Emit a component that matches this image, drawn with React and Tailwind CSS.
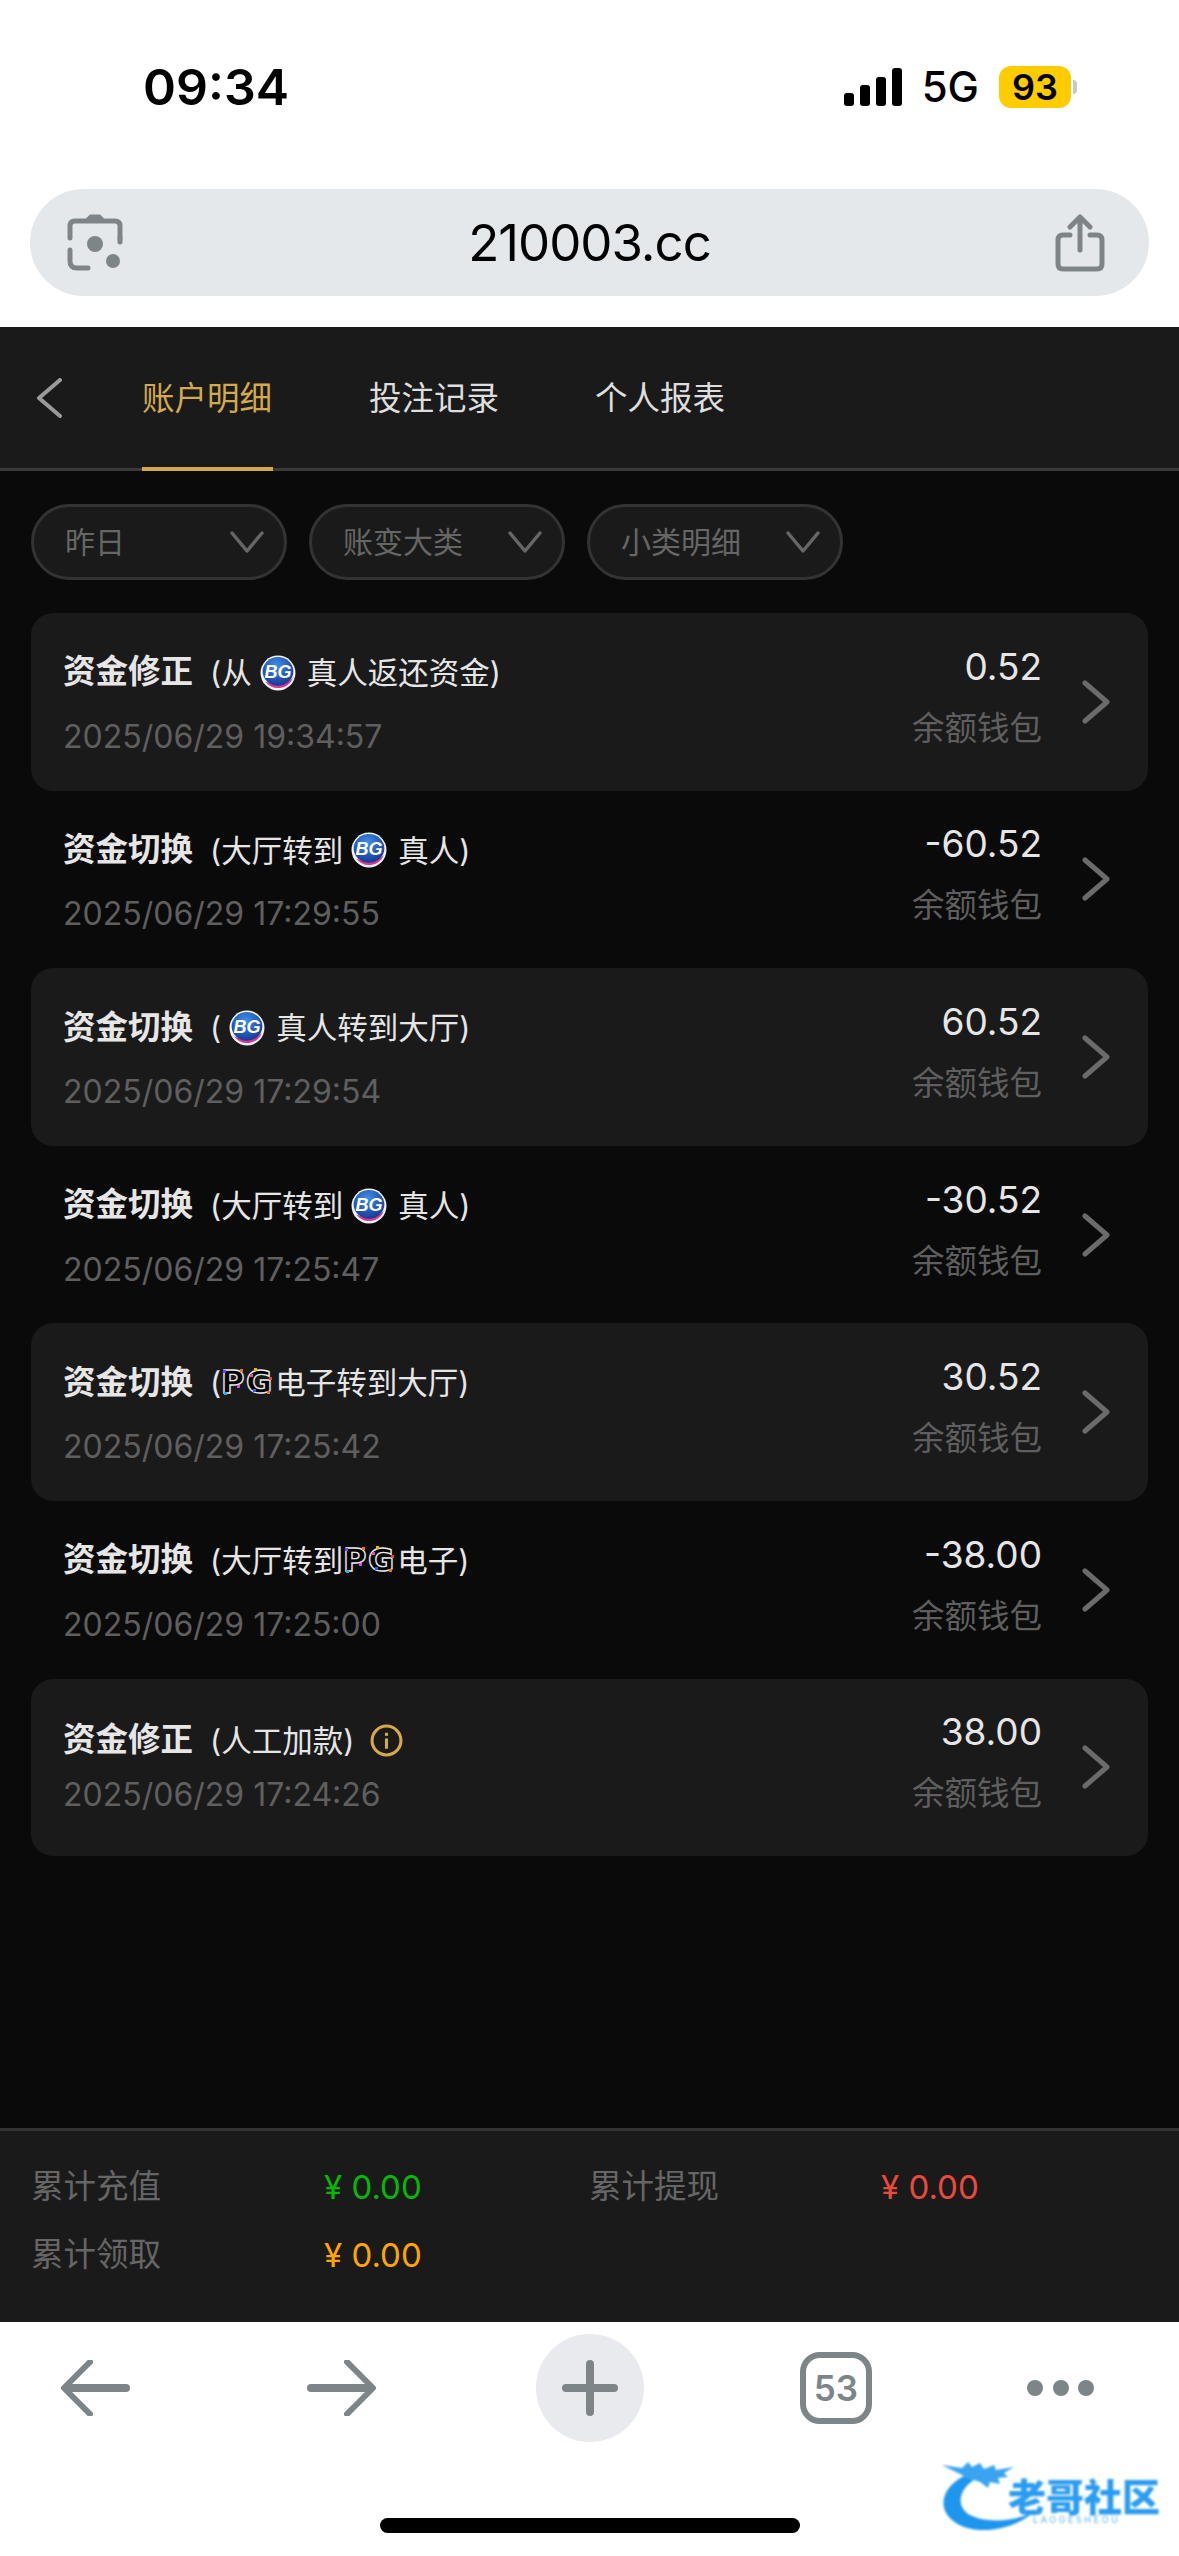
import React from "react";

const cjk = "font-['Inter','Noto_Sans_CJK_SC',sans-serif]";

// BG vendor badge
const BgLogo = () => (
  <svg width="36" height="36" viewBox="0 0 34 34" className="ml-[8px] mr-[11px] flex-none">
    <defs>
      <radialGradient id="bgBlue" cx="45%" cy="30%" r="75%">
        <stop offset="0%" stopColor="#3f8fe8" />
        <stop offset="100%" stopColor="#12358f" />
      </radialGradient>
    </defs>
    <circle cx="17" cy="17" r="16.5" fill="#f4f4f8" />
    <path d="M5 25 A15 15 0 0 0 31 22 Q20 31 5 25 Z" fill="#e0358f" />
    <ellipse cx="17" cy="15.5" rx="14.5" ry="13.5" fill="url(#bgBlue)" />
    <text x="17" y="22" textAnchor="middle" fontFamily="Liberation Sans" fontWeight="700" fontStyle="italic" fontSize="17" fill="#fff">BG</text>
  </svg>
);

// PG vendor badge: outlined letters with coloured corner dots
const PgLogo = () => (
  <svg width="54" height="32" viewBox="0 0 54 32" className="flex-none overflow-visible">
    <text x="0" y="26" fontFamily="DejaVu Sans" fontWeight="700" fontSize="32" fill="#000" stroke="#e8e8e8" strokeWidth="1.4">P</text>
    <text x="25" y="26" fontFamily="DejaVu Sans" fontWeight="700" fontSize="32" fill="#000" stroke="#e8e8e8" strokeWidth="1.4">G</text>
    <rect x="2" y="3" width="3" height="3" fill="#7c3aed" />
    <rect x="19" y="2" width="3" height="3" fill="#f97316" />
    <rect x="3" y="25" width="3" height="3" fill="#22b8e8" />
    <rect x="16" y="18" width="3" height="3" fill="#d946ef" />
    <rect x="29" y="7" width="3" height="3" fill="#ec4899" />
    <rect x="33" y="1" width="3" height="3" fill="#f5b50a" />
    <rect x="48" y="10" width="3" height="3" fill="#ef4444" />
    <rect x="32" y="22" width="3" height="3" fill="#2563eb" />
    <rect x="46" y="24" width="3" height="3" fill="#f97316" />
  </svg>
);

const rows = [
  { title: "资金修正", note: ["(从", "bg", "真人返还资金)"], time: "2025/06/29 19:34:57", amount: "0.52", card: true },
  { title: "资金切换", note: ["(大厅转到", "bg", "真人)"], time: "2025/06/29 17:29:55", amount: "-60.52" },
  { title: "资金切换", note: ["(", "bg", "真人转到大厅)"], time: "2025/06/29 17:29:54", amount: "60.52", card: true },
  { title: "资金切换", note: ["(大厅转到", "bg", "真人)"], time: "2025/06/29 17:25:47", amount: "-30.52" },
  { title: "资金切换", note: ["(", "pg", "电子转到大厅)"], time: "2025/06/29 17:25:42", amount: "30.52", card: true },
  { title: "资金切换", note: ["(大厅转到", "pg", "电子)"], time: "2025/06/29 17:25:00", amount: "-38.00" },
  { title: "资金修正", note: ["(人工加款)"], time: "2025/06/29 17:24:26", amount: "38.00", card: true, info: true },
];

const Filter = ({ label }) => (
  <div className="flex h-[76px] w-[256px] flex-none items-center justify-between rounded-full border-[3px] border-[#333333] bg-[#1a1a1a] pl-[31px] pr-[20px] text-[30px] text-[#666666]">
    <span>{label}</span>
    <svg width="34" height="22" viewBox="0 0 34 22" fill="none" stroke="#666666" strokeWidth="3.5" strokeLinecap="round" strokeLinejoin="round">
      <path d="M2 2 L17 20 L32 2" />
    </svg>
  </div>
);

const Row = ({ row }) => (
  <div className={`flex h-[177.6px] items-center rounded-[22px] pl-[32px] pr-[38px] ${row.card ? "bg-[#1a1a1a]" : ""}`}>
    <div className={`flex-1 ${row.info ? "pt-[1px]" : "pt-[6px]"}`}>
      <div className="flex h-[40px] items-center text-[30.5px] text-[#e6e6e6]">
        <span className="mr-[17px] flex-none text-[32.5px] font-bold">{row.title}</span>
        {row.note.map((part, i) =>
          part === "bg" ? <BgLogo key={i} /> : part === "pg" ? <PgLogo key={i} /> : <span key={i}>{part}</span>
        )}
        {row.info && (
          <svg width="33" height="33" viewBox="0 0 32 32" className="ml-[16px] flex-none">
            <circle cx="16" cy="16" r="14" fill="none" stroke="#d4a94a" strokeWidth="3" />
            <rect x="14.5" y="14" width="3" height="10" fill="#d4a94a" />
            <rect x="14.5" y="8.5" width="3" height="3" fill="#d4a94a" />
          </svg>
        )}
      </div>
      <div className={`${row.info ? "mt-[14px]" : "mt-[24px]"} text-[32px] leading-[40px] text-[#5f5f5f]`}>{row.time}</div>
    </div>
    <div className="mb-[8px] flex flex-col items-end">
      <div className="text-[37px] leading-[44px] text-[#e6e6e6]">{row.amount}</div>
      <div className="mt-[18px] text-[32.5px] leading-[44px] text-[#5f5f5f]">余额钱包</div>
    </div>
    <svg width="28" height="44" viewBox="0 0 28 44" fill="none" stroke="#6b6b6b" strokeWidth="5" strokeLinecap="round" strokeLinejoin="round" className="ml-[40px] flex-none">
      <path d="M3 3 L25 22 L3 41" />
    </svg>
  </div>
);

const Stat = ({ label, value, color }) => (
  <>
    <div className="text-[32.5px] leading-[68px] text-[#666666]">{label}</div>
    <div className={`text-[33px] leading-[68px] ${color}`}>{value}</div>
  </>
);

export default function App() {
  return (
    <div className={`relative flex h-[2556px] w-[1179px] flex-col overflow-hidden bg-white ${cjk}`}>
      {/* status bar + address bar */}
      <div className="h-[327px] flex-none">
        <div className="flex h-[189px] items-start justify-between pl-[143px] pr-[102px] pt-[59px]">
          <span className="text-[50px] font-semibold leading-[56px] text-black">09:34</span>
          <div className="flex items-center pt-[7px]">
            <svg width="58" height="38" viewBox="0 0 58 38" className="mr-[20px]">
              <rect x="0" y="25" width="10" height="13" rx="3" />
              <rect x="16" y="17" width="10" height="21" rx="3" />
              <rect x="32" y="9" width="10" height="29" rx="3" />
              <rect x="48" y="0" width="10" height="38" rx="3" />
            </svg>
            <span className="mr-[20px] text-[42px] font-medium leading-[42px] text-black">5G</span>
            <span className="flex h-[42px] w-[72px] items-center justify-center rounded-[12px] bg-[#ffcc00] text-[36px] font-semibold text-black">93</span>
            <span className="ml-[2px] h-[14px] w-[4px] rounded-r-full bg-[#c8c8c8]" />
          </div>
        </div>
        <div className="mx-[30px] flex h-[107px] items-center justify-between rounded-[54px] bg-[#e5e8eb] pl-[36px] pr-[44px]">
          <svg width="58" height="58" viewBox="0 0 58 58" fill="none" stroke="#7e8589" strokeWidth="5" strokeLinecap="round">
            <path d="M22 6 L25 3 H33 L36 6 Z" fill="#7e8589" />
            <path d="M4 24 V12 Q4 7 9 7 H49 Q54 7 54 12 V24" />
            <path d="M4 36 V47 Q4 54 11 54 H22" />
            <path d="M54 24 V28" />
            <circle cx="29" cy="30" r="8" fill="#7e8589" stroke="none" />
            <circle cx="47" cy="47" r="7" fill="#7e8589" stroke="none" />
          </svg>
          <span className="text-[51px] leading-[60px] tracking-[-1px] text-black">210003.cc</span>
          <svg width="50" height="58" viewBox="0 0 50 58" fill="none" stroke="#7e8589" strokeWidth="5" strokeLinecap="round" strokeLinejoin="round">
            <path d="M25 36 V4 M15 13 L25 3 L35 13" />
            <path d="M15 21 H8 Q3 21 3 26 V50 Q3 55 8 55 H42 Q47 55 47 50 V26 Q47 21 42 21 H35" />
          </svg>
        </div>
      </div>

      {/* tabs */}
      <div className="flex h-[144px] flex-none items-stretch border-b-[3px] border-[#3a3a3a] bg-[#1a1a1a] pl-[36px]">
        <div className="flex w-[106px] items-center">
          <svg width="26" height="40" viewBox="0 0 26 40" fill="none" stroke="#9a9a9a" strokeWidth="4" strokeLinecap="round" strokeLinejoin="round">
            <path d="M24 2 L3 20 L24 38" />
          </svg>
        </div>
        <div className="relative flex w-[131px] items-center pt-[3px] text-[32.5px] text-[#d4a94a]">
          账户明细
          <span className="absolute bottom-[-3px] left-0 h-[4px] w-full bg-[#d4a94a]" />
        </div>
        <div className="ml-[96px] flex items-center pt-[3px] text-[32.5px] text-[#dedede]">投注记录</div>
        <div className="ml-[96px] flex items-center pt-[3px] text-[32.5px] text-[#dedede]">个人报表</div>
      </div>

      {/* list */}
      <div className="flex-1 bg-[#0a0a0a] px-[31px] pt-[33px]">
        <div className="flex gap-[22px]">
          <Filter label="昨日" />
          <Filter label="账变大类" />
          <Filter label="小类明细" />
        </div>
        <div className="mt-[33px]">
          {rows.map((row) => (
            <Row key={row.time} row={row} />
          ))}
        </div>
      </div>

      {/* totals */}
      <div className="h-[194px] flex-none border-t-[3px] border-[#333333] bg-[#1a1a1a] pl-[31px] pt-[22px]">
        <div className="grid grid-cols-[293px_265px_292px_1fr]">
          <Stat label="累计充值" value="¥ 0.00" color="text-[#06b806]" />
          <Stat label="累计提现" value="¥ 0.00" color="text-[#ea4a3a]" />
          <Stat label="累计领取" value="¥ 0.00" color="text-[#ffa500]" />
        </div>
      </div>

      {/* browser toolbar */}
      <div className="h-[234px] flex-none bg-white pt-[12px]">
        <div className="flex h-[108px] items-center">
          <svg width="70" height="56" viewBox="0 0 70 56" fill="none" stroke="#7e8589" strokeLinecap="round" strokeLinejoin="round" className="ml-[60px] flex-none">
            <path d="M30 2 L4 28 L30 54" strokeWidth="6" />
            <path d="M8 28 H66" strokeWidth="8" />
          </svg>
          <svg width="70" height="56" viewBox="0 0 70 56" fill="none" stroke="#7e8589" strokeLinecap="round" strokeLinejoin="round" className="ml-[177px] flex-none">
            <path d="M40 2 L66 28 L40 54" strokeWidth="6" />
            <path d="M4 28 H62" strokeWidth="8" />
          </svg>
          <div className="ml-[159px] flex h-[108px] w-[108px] flex-none items-center justify-center rounded-full bg-[#e9eaee]">
            <svg width="56" height="56" viewBox="0 0 56 56" stroke="#7e8589" strokeWidth="8" strokeLinecap="round">
              <path d="M28 4 V52 M4 28 H52" />
            </svg>
          </div>
          <div className="ml-[156px] flex h-[72px] w-[72px] flex-none items-center justify-center rounded-[20px] border-[6px] border-[#7e8589] text-[35px] font-semibold text-[#7e8589]">
            53
          </div>
          <div className="ml-[155px] flex w-[67px] flex-none justify-between">
            <span className="h-[16px] w-[16px] rounded-full bg-[#7e8589]" />
            <span className="h-[16px] w-[16px] rounded-full bg-[#7e8589]" />
            <span className="h-[16px] w-[16px] rounded-full bg-[#7e8589]" />
          </div>
        </div>
        <div className="mx-auto mt-[76px] h-[15px] w-[420px] rounded-full bg-black" />
      </div>

      {/* site watermark */}
      <div className="absolute left-[938px] top-[2458px] h-[88px] w-[230px] blur-[1px]">
        <svg width="110" height="80" viewBox="0 0 110 80" className="absolute left-0 top-0">
          <path d="M26 18 C6 28 -2 48 14 62 C30 77 70 76 96 54 C78 63 50 66 32 57 C18 49 20 32 36 22 Z" fill="#1e96ee" />
          <path d="M4 7 L24 10 L30 4 L34 9 L42 5 L46 11 L56 7 L58 12 L76 9 L66 15 L70 19 L60 20 L62 26 L52 24 L50 30 L42 24 L30 20 Z" fill="#3aa4f0" />
        </svg>
        <span className="absolute left-[70px] top-[22px] whitespace-nowrap text-[38px] font-black leading-[34px] text-[#2a9cf0]">老哥社区</span>
        <span className="absolute left-[95px] top-[57px] whitespace-nowrap text-[9px] leading-[10px] tracking-[2.6px] text-[#5cb4f0]">LAOGESHEOU</span>
      </div>
    </div>
  );
}
